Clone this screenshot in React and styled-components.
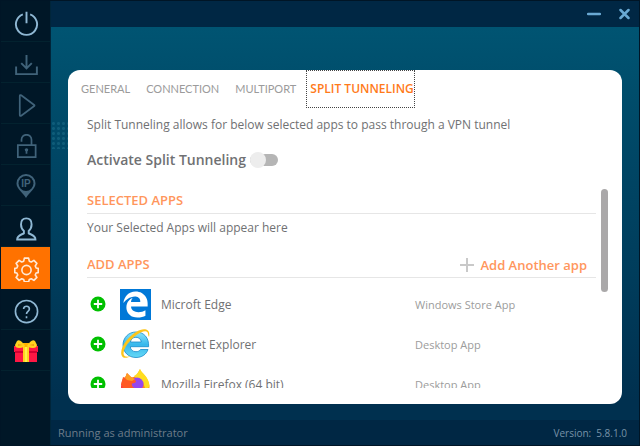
import React, { useState } from "react";
import styled, { createGlobalStyle } from "styled-components";
import { FaEdgeLegacy } from "react-icons/fa";

const GlobalStyle = createGlobalStyle`
  *, *::before, *::after { box-sizing: border-box; }
  html, body, #root { height: 100%; }
  body { margin: 0; background: #001526; font-family: "Open Sans", "Noto Sans", sans-serif; }
  h2, p, ul { margin: 0; padding: 0; }
  button { font: inherit; border: 0; padding: 0; background: none; cursor: pointer; }
`;

const Window = styled.div`
  display: flex;
  height: 100vh;
  padding: 1px;
  overflow: hidden;
`;

const Sidebar = styled.nav`
  display: flex;
  flex-direction: column;
  flex: 0 0 50px;
  background: #001727;
  border-right: 1px solid #00253a;
`;

const NavButton = styled.button`
  display: flex;
  flex: 0 0 41px;
  align-items: center;
  justify-content: center;
  border-bottom: 1px solid #03222f;
  padding: 4px 0 0 2px;
  color: ${(p) => (p.$tone === "bright" ? "#8fb8d4" : "#40637a")};
  ${(p) => p.$active && "flex-basis: 42px; background: #ff7200; color: #ffe9d6; border-color: #ff7200;"}
`;

const Main = styled.div`
  display: flex;
  flex: 1;
  flex-direction: column;
  min-width: 0;
  background: linear-gradient(#005472 27px, #004d6b 90px, #004564 170px, #003d5c 270px, #00304f 400px);
`;

const TitleBar = styled.header`
  display: flex;
  flex: 0 0 26px;
  align-items: center;
  justify-content: flex-end;
  gap: 18px;
  padding-right: 9px;
  background: #002744;
  color: #69a9d3;
`;

const WindowButton = styled.button`
  display: flex;
  color: inherit;
`;

const Stage = styled.div`
  display: flex;
  flex: 1;
  min-height: 0;
  padding: 43px 17px 16px 0;
`;

const DotPattern = styled.div`
  flex: 0 0 17px;
  height: 28px;
  margin-top: 51px;
  background: radial-gradient(circle, rgba(60, 150, 175, 0.25) 1px, transparent 2px) 0 0 / 5px 5px;
`;

const Card = styled.main`
  display: flex;
  flex: 1;
  flex-direction: column;
  min-width: 0;
  padding-bottom: 16px;
  border-radius: 12px;
  background: #fff;
  color: #707173;
`;

const Tabs = styled.div`
  display: flex;
  flex: 0 0 38px;
  gap: 16px;
  padding-left: 13px;
`;

const Tab = styled.button`
  color: #9b9b9b;
  font: 11px/38px "Lato", sans-serif;
  white-space: nowrap;
  outline: none;
  ${(p) =>
    p.$active &&
    `margin-left: -6px; padding-left: 3px; border: 1px dotted #444; color: #ff7a1a;
     font-family: "Open Sans", sans-serif; font-weight: 600; font-size: 12px; line-height: 36px;`}
`;

const Body = styled.div`
  display: flex;
  flex: 1;
  flex-direction: column;
  min-height: 0;
  padding: 0 14px 0 19px;
`;

const Intro = styled.p`
  font-size: 12px;
  line-height: 34px;
`;

const ToggleLabel = styled.label`
  display: flex;
  align-items: center;
  gap: 4px;
  margin-bottom: 10px;
  font-size: 14px;
  font-weight: 600;
  line-height: 36px;
`;

const Toggle = styled.input`
  appearance: none;
  display: flex;
  align-items: center;
  width: 28px;
  height: 12px;
  margin: 0;
  border-radius: 6px;
  background: #b5b5b5;
  &::before {
    content: "";
    width: 16px;
    height: 16px;
    border-radius: 50%;
    background: #ededed;
  }
  &:checked { justify-content: flex-end; background: #ffb680; }
`;

const ScrollArea = styled.div`
  display: flex;
  flex: 1;
  gap: 5px;
  min-height: 0;
`;

const ScrollContent = styled.div`
  flex: 1;
  overflow: hidden;
`;

const ScrollThumb = styled.div`
  flex: 0 0 7px;
  height: 103px;
  margin-top: 1px;
  border-radius: 4px;
  background: #aaa8a9;
`;

const SectionHead = styled.div`
  display: flex;
  justify-content: space-between;
  height: 26px;
  padding-right: 9px;
  border-bottom: 1px solid #e6e6e6;
  color: #ff965c;
  line-height: 24px;
`;

const SectionTitle = styled.h2`
  font-size: 13px;
  font-weight: 600;
`;

const AddButton = styled.button`
  display: flex;
  align-items: center;
  gap: 6px;
  color: inherit;
  font-size: 13px;
  font-weight: 600;
`;

const Hint = styled.p`
  margin-bottom: 10px;
  font-size: 12px;
  line-height: 28px;
`;

const AppList = styled.ul`
  padding-top: 6px;
  list-style: none;
`;

const AppRow = styled.li`
  display: grid;
  grid-template-columns: 33px 41px 1fr 181px;
  align-items: center;
  height: 40px;
  font-size: 12px;
  svg { display: block; }
`;

const RowButton = styled.button`
  display: flex;
  padding-left: 3px;
`;

const AppType = styled.span`
  color: #9c9c9c;
  font-size: 11px;
`;

const EdgeTile = styled.span`
  display: flex;
  align-items: center;
  justify-content: center;
  width: 31px;
  height: 31px;
  background: #0078d7;
  color: #fff;
  font-size: 27px;
`;

const Footer = styled.footer`
  display: flex;
  flex: 0 0 25px;
  align-items: center;
  justify-content: space-between;
  padding: 0 12px 0 7px;
  background: #002744;
  color: #6d7c89;
  font-size: 11px;
`;

const Version = styled.span`
  display: flex;
  gap: 5px;
  color: #7893a8;
  font-size: 10px;
`;

const Line = ({ children, width = 1.7 }) => (
  <svg width="25" height="25" viewBox="0 0 26 26" fill="none" stroke="currentColor" strokeWidth={width} aria-hidden="true">
    {children}
  </svg>
);

const PowerIcon = () => (
  <Line width={2}>
    <path d="M9.200 3.500A11 11 0 1 0 16.800 3.500M13 .8v12" />
  </Line>
);
const DownloadIcon = () => (
  <Line width={2}>
    <path d="M2.200 15v8h21.600v-8M13 3v13.500M7.500 11.500 13 17l5.500-5.500" />
  </Line>
);
const PlayIcon = () => (
  <Line width={1.8}>
    <path d="M6 3.200v19.600q0 1.700 1.500.8L21 13.500q.7-.5 0-1L7.500 2.400Q6 1.500 6 3.200z" />
  </Line>
);
const LockIcon = () => (
  <Line width={1.8}>
    <path d="M4 11.500h18.500v12.500H4zM7.800 8V6a5.200 5.200 0 0 1 10.400 0v5.500M13 16v4.500" />
    <circle cx="13" cy="16.500" r="1.800" fill="currentColor" stroke="none" />
  </Line>
);
const PinLabel = styled.text`
  font: 700 10px "Liberation Sans", sans-serif;
`;
const PinIcon = () => (
  <svg width="25" height="26" viewBox="0 0 25 26" aria-hidden="true">
    <path fill="currentColor" d="M12 0a9.500 9.500 0 0 0-9.500 9.500C2.500 15 9 18.500 12 24c3-5.500 9.500-9 9.500-14.500A9.500 9.500 0 0 0 12 0z" />
    <circle cx="12" cy="9.500" r="7.500" fill="#001727" />
    <PinLabel x="12" y="13" textAnchor="middle" fill="currentColor">IP</PinLabel>
  </svg>
);
const UserIcon = () => (
  <Line width={2}>
    <path d="M10.300 15.500V18c-2.500 1.500-7 1.800-7 6.500h19c0-4.700-4.500-5-7-6.500v-2.500c2-1.800 3-3.800 3-6.700 0-4-2-6.300-5.500-6.300S7.300 4.800 7.300 8.800c0 2.900 1 4.900 3 6.700z" />
  </Line>
);
const GearIcon = () => (
  <Line>
    <path strokeLinejoin="round" d="m10.800 1.200h4.400l.7 3.100 2.100.9 2.700-1.700 3.100 3.100-1.700 2.700.9 2.100 2.200.4v4.400l-2.200.4-.9 2.100 1.700 2.500-3.100 3.100-2.700-1.700-2.100.9-.7 2.400h-4.400l-.7-2.400-2.100-.9-2.700 1.700-3.100-3.100 1.700-2.500-.9-2.100-2.200-.4v-4.400l2.200-.4.9-2.100-1.700-2.700 3.100-3.100 2.700 1.700 2.100-.9z" />
    <circle cx="13" cy="13.500" r="4.800" />
  </Line>
);
const HelpIcon = () => (
  <Line>
    <circle cx="13" cy="13" r="11.500" />
    <path d="M10 10.500c0-4 6-4 6 0 0 2.500-3 2.300-3 5M13 18v2" />
  </Line>
);
const GiftIcon = () => (
  <svg width="25" height="26" viewBox="0 0 25 26" aria-hidden="true">
    <path fill="#ff1744" d="M0 7h24v6h-1v10H1V13H0z" />
    <path fill="#d50032" d="M1 12h22v2H1z" />
    <path fill="#ffd21f" d="M9 7h6v16H9z" />
    <path fill="#fff04a" d="M11 7h2v16h-2z" />
    <path fill="#ffb300" d="M9 4h6v4H9z" />
    <path fill="#ffd21f" d="M10 8C5 10 1 9 1 6l2-4q2-2 5 1l3 4zM14 8c5 2 9 1 9-2l-2-4q-2-2-5 1l-3 4z" />
    <path fill="#f29b10" d="m4 5 5 1-5 1zM20 5l-5 1 5 1z" />
  </svg>
);

const AddIcon = () => (
  <svg width="16" height="16" viewBox="0 0 16 16" aria-hidden="true">
    <circle cx="8" cy="8" r="7.500" fill="#00c000" />
    <path d="M8 3.800v8.400M3.800 8h8.400" stroke="#fff" strokeWidth="1.800" />
  </svg>
);
const ExplorerIcon = () => (
  <svg width="31" height="31" viewBox="0 0 31 31" fill="none" aria-hidden="true">
    <defs>
      <linearGradient id="ieBlue" x1="0" y1="0" x2="0" y2="1">
        <stop offset="0" stopColor="#8be5fb" />
        <stop offset=".5" stopColor="#37b7ec" />
        <stop offset="1" stopColor="#65d8f6" />
      </linearGradient>
    </defs>
    <path
      fill="url(#ieBlue)"
      stroke="#1689c9"
      strokeWidth=".8"
      fillRule="evenodd"
      d="M16 3C8.500 3 3 8.800 3 16s5.500 12.500 13 12.500c5.800 0 10.300-3 12-8h-7.500c-1 1.500-2.500 2.200-4.500 2.200-3.500 0-5.500-2-5.700-5h18.300C29.200 9 24 3 16 3zM10.400 13c.5-3 2.600-4.700 5.500-4.700s5 1.700 5.400 4.700z"
    />
    <path
      fill="#fdc51b"
      d="M29 8C31-.5 23.500-1.500 16 3 7.500 8.200-.5 19 1.500 26c1.200 4.200 6 3 9.500 1-3.200 1-6.500 1.200-7.300-1.500C2.500 20.500 9 11.500 16.500 6 22 1.800 28 .5 28 4.800q0 1.500 1 3.200z"
    />
  </svg>
);
const FirefoxIcon = () => (
  <svg width="31" height="31" viewBox="0 0 31 31" aria-hidden="true">
    <defs>
      <linearGradient id="flame" x1="0" y1="1" x2="1" y2="0">
        <stop offset="0" stopColor="#ff185d" />
        <stop offset=".5" stopColor="#ff6a1f" />
        <stop offset="1" stopColor="#ffe326" />
      </linearGradient>
    </defs>
    <path fill="url(#flame)" d="M1 18c0-4 1-7 3-10l1 1 2-4 4 4 5-2L20 0c1 4 8 7 9.500 17A14 14 0 0 1 1 18z" />
    <path fill="#ffdd20" d="M14 7q4-2 6-7c1 4 9 7 9.500 17L26 22l-3-9-7-4z" />
    <circle cx="17" cy="15" r="6.500" fill="#9547ef" />
    <path fill="#ff5a25" d="M1 16 3 8l2 1 2-5 4 4 2 1 3 3q0 2-4 2.500-1 4 5 5.500l-4 5q-9-1-11-9z" />
    <path fill="#ff9d22" d="M5 9 7 4l4 4 4 2-3 2-5-1z" />
  </svg>
);

const NAV = [
  ["Power", PowerIcon, "bright"],
  ["Download", DownloadIcon],
  ["Play", PlayIcon],
  ["Unlock", LockIcon],
  ["IP address", PinIcon],
  ["Account", UserIcon, "bright"],
  ["Settings", GearIcon, "bright"],
  ["Help", HelpIcon, "bright"],
  ["Rewards", GiftIcon],
];
const TABS = ["GENERAL", "CONNECTION", "MULTIPORT", "SPLIT TUNNELING"];
const APPS = [
  { name: "Microft Edge", type: "Windows Store App", icon: <EdgeTile><FaEdgeLegacy /></EdgeTile> },
  { name: "Internet Explorer", type: "Desktop App", icon: <ExplorerIcon /> },
  { name: "Mozilla Firefox (64 bit)", type: "Desktop App", icon: <FirefoxIcon /> },
];

export default function App() {
  const [tab, setTab] = useState("SPLIT TUNNELING");
  const [enabled, setEnabled] = useState(false);
  return (
    <>
      <GlobalStyle />
      <Window>
        <Sidebar>
          {NAV.map(([label, Icon, tone]) => (
            <NavButton key={label} aria-label={label} $tone={tone} $active={label === "Settings"}>
              <Icon />
            </NavButton>
          ))}
        </Sidebar>
        <Main>
          <TitleBar>
            <WindowButton aria-label="Minimize">
              <svg width="14" height="12" viewBox="0 0 14 12">
                <path d="M1 6h12" stroke="currentColor" strokeWidth="2.500" strokeLinecap="round" />
              </svg>
            </WindowButton>
            <WindowButton aria-label="Close">
              <svg width="11" height="12" viewBox="0 0 11 12">
                <path d="m1.500 2 8 8m0-8-8 8" stroke="currentColor" strokeWidth="2.500" strokeLinecap="round" />
              </svg>
            </WindowButton>
          </TitleBar>
          <Stage>
            <DotPattern />
            <Card>
              <Tabs role="tablist">
                {TABS.map((t) => (
                  <Tab key={t} role="tab" aria-selected={t === tab} $active={t === tab} onClick={() => setTab(t)}>
                    {t}
                  </Tab>
                ))}
              </Tabs>
              <Body>
                <Intro>Split Tunneling allows for below selected apps to pass through a VPN tunnel</Intro>
                <ToggleLabel>
                  Activate Split Tunneling
                  <Toggle type="checkbox" role="switch" checked={enabled} onChange={(e) => setEnabled(e.target.checked)} />
                </ToggleLabel>
                <ScrollArea>
                  <ScrollContent>
                    <SectionHead>
                      <SectionTitle>SELECTED APPS</SectionTitle>
                    </SectionHead>
                    <Hint>Your Selected Apps will appear here</Hint>
                    <SectionHead>
                      <SectionTitle>ADD APPS</SectionTitle>
                      <AddButton>
                        <svg width="14" height="14" viewBox="0 0 14 14" aria-hidden="true">
                          <path d="M7 0v14M0 7h14" stroke="#c9c9c9" strokeWidth="2" />
                        </svg>
                        Add Another app
                      </AddButton>
                    </SectionHead>
                    <AppList>
                      {APPS.map((app) => (
                        <AppRow key={app.name}>
                          <RowButton aria-label={`Add ${app.name}`}>
                            <AddIcon />
                          </RowButton>
                          {app.icon}
                          <span>{app.name}</span>
                          <AppType>{app.type}</AppType>
                        </AppRow>
                      ))}
                    </AppList>
                  </ScrollContent>
                  <ScrollThumb />
                </ScrollArea>
              </Body>
            </Card>
          </Stage>
          <Footer>
            <span>Running as administrator</span>
            <Version>
              <span>Version:</span>
              <span>5.8.1.0</span>
            </Version>
          </Footer>
        </Main>
      </Window>
    </>
  );
}
